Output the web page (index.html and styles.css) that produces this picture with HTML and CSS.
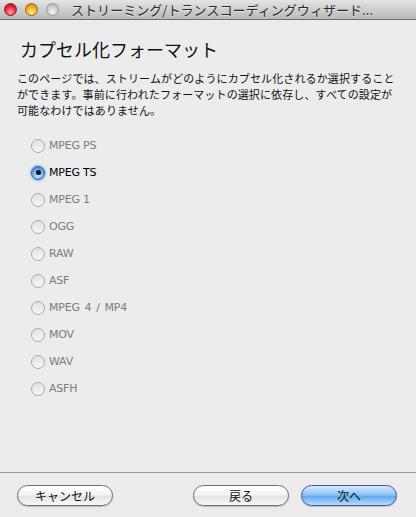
FILE: index.html
```html
<!DOCTYPE html>
<html lang="ja">
<head>
<meta charset="utf-8">
<link rel="stylesheet" href="styles.css">
</head>
<body>
<div class="window">
  <div class="titlebar">
    <div class="lights">
      <span class="light red"></span>
      <span class="light orange"></span>
      <span class="light gray"></span>
    </div>
    <div class="title">ストリーミング/トランスコーディングウィザード...</div>
  </div>
  <div class="content">
    <h1 class="heading">カプセル化フォーマット</h1>
    <p class="desc">このページでは、ストリームがどのようにカプセル化されるか選択すること<br>ができます。事前に行われたフォーマットの選択に依存し、すべての設定が<br>可能なわけではありません。</p>
    <ul class="options">
      <li class="opt disabled"><span class="radio"></span><span class="label">MPEG PS</span></li>
      <li class="opt selected"><span class="radio"><span class="dot"></span></span><span class="label">MPEG TS</span></li>
      <li class="opt disabled"><span class="radio"></span><span class="label">MPEG 1</span></li>
      <li class="opt disabled"><span class="radio"></span><span class="label">OGG</span></li>
      <li class="opt disabled"><span class="radio"></span><span class="label">RAW</span></li>
      <li class="opt disabled"><span class="radio"></span><span class="label">ASF</span></li>
      <li class="opt disabled"><span class="radio"></span><span class="label wide">MPEG 4 / MP4</span></li>
      <li class="opt disabled"><span class="radio"></span><span class="label">MOV</span></li>
      <li class="opt disabled"><span class="radio"></span><span class="label">WAV</span></li>
      <li class="opt disabled"><span class="radio"></span><span class="label">ASFH</span></li>
    </ul>
  </div>
  <div class="footer">
    <button class="btn">キャンセル</button>
    <div class="spacer"></div>
    <button class="btn">戻る</button>
    <button class="btn primary">次へ</button>
  </div>
</div>
</body>
</html>
```

FILE: styles.css
```css
html, body {
  margin: 0;
  padding: 0;
}
body {
  width: 416px;
  height: 517px;
  overflow: hidden;
  background: #ececec;
  font-family: "Noto Sans CJK JP", "DejaVu Sans", sans-serif;
}
.window {
  height: 517px;
  display: flex;
  flex-direction: column;
}
.titlebar {
  height: 19px;
  flex: none;
  display: flex;
  align-items: center;
  background: linear-gradient(#e4e4e4, #b9b9b9);
  border-bottom: 1px solid #6e6e6e;
}
.lights {
  display: flex;
  gap: 8px;
  padding-left: 4px;
}
.light {
  width: 13px;
  height: 13px;
  border-radius: 50%;
  box-sizing: border-box;
}
.light.red {
  background: radial-gradient(circle at 50% 72%, #ffb0b0 0%, #f5283c 50%, #b0001a 100%);
  border: 1px solid #8c1e27;
}
.light.orange {
  background: radial-gradient(circle at 50% 72%, #fff0a0 0%, #f8b025 50%, #c07000 100%);
  border: 1px solid #9a6a1e;
}
.light.gray {
  background: radial-gradient(circle at 50% 72%, #f6f6f6 0%, #cbcbcb 55%, #a8a8a8 100%);
  border: 1px solid #9b9b9b;
}
.title {
  margin-left: 12px;
  font-size: 13px;
  color: #2a2a2a;
  text-shadow: 0 1px 0 rgba(255,255,255,0.5);
  white-space: nowrap;
  letter-spacing: 0.05px;
}
.content {
  flex: 1;
  padding: 0 17px;
}
.heading {
  margin: 16px 0 0 3px;
  font-size: 18px;
  font-weight: normal;
  line-height: 26px;
  color: #111;
}
.desc {
  margin: 8px 0 0 0;
  font-size: 11px;
  letter-spacing: 0.12px;
  line-height: 16px;
  color: #111;
  white-space: nowrap;
}
.options {
  list-style: none;
  margin: 14px 0 0 0;
  padding: 0 0 0 14px;
  display: flex;
  flex-direction: column;
}
.opt {
  height: 27px;
  display: flex;
  align-items: center;
  gap: 4px;
}
.radio {
  width: 14px;
  height: 14px;
  box-sizing: border-box;
  border-radius: 50%;
  border: 1px solid #a9a9a9;
  background: linear-gradient(#e2e2e2, #f7f7f7);
  display: flex;
  align-items: center;
  justify-content: center;
}
.label {
  font-family: "DejaVu Sans", sans-serif;
  font-size: 11px;
  color: #7c7c7c;
  letter-spacing: -0.2px;
}
.label.wide {
  word-spacing: 1.5px;
}
.selected .label {
  color: #000;
}
.selected .radio {
  border: 1px solid #2c5ea8;
  background: radial-gradient(circle at 50% 70%, #cfe6ff 0%, #6aa9ea 55%, #2e6fc6 100%);
  box-shadow: 0 0 2px 1px rgba(90,150,230,0.6);
}
.dot {
  width: 5px;
  height: 5px;
  border-radius: 50%;
  background: #111;
}
.footer {
  flex: none;
  height: 45px;
  border-top: 1px solid #9a9a9a;
  display: flex;
  align-items: flex-start;
  padding: 12px 19px 0 17px;
  box-sizing: border-box;
  gap: 12px;
}
.spacer {
  flex: 1;
}
.btn {
  width: 96px;
  height: 21px;
  border-radius: 11px;
  border: 1px solid #6f6f6f;
  background: linear-gradient(#ffffff 0%, #f3f3f3 45%, #e4e4e4 55%, #f8f8f8 100%);
  font-family: "Noto Sans CJK JP", sans-serif;
  font-size: 12px;
  line-height: 19px;
  padding: 0;
  color: #111;
  box-shadow: 0 1px 1px rgba(0,0,0,0.2);
}
.btn.primary {
  border: 1px solid #4b4f96;
  background: linear-gradient(#d5ebff 0%, #8cc4f8 45%, #63a9ef 55%, #b6defd 100%);
}
```
